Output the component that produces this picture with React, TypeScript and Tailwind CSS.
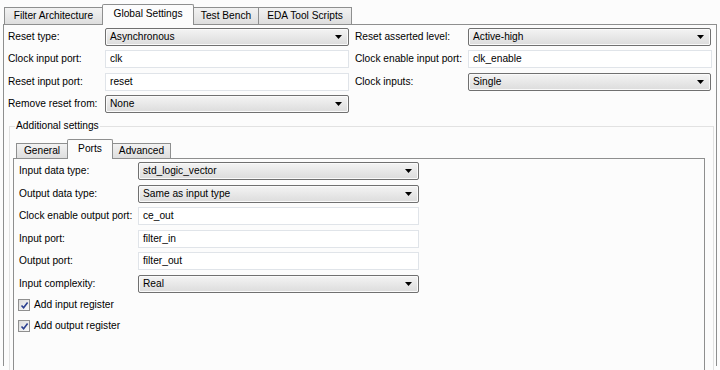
import React from "react";

const F = "font-['Liberation_Sans',Arial,sans-serif] text-[10.2px] text-black";

function Arrow() {
  return (
    <svg width="7" height="4" viewBox="0 0 7 4" className="shrink-0">
      <polygon points="0,0 7,0 3.5,4" fill="#000" />
    </svg>
  );
}

function Select({ value, w }: { value: string; w: string }) {
  return (
    <div
      className={`${w} h-[18px] flex items-center justify-between pl-[4px] pr-[6px] border border-[#707070] rounded-[2px] bg-linear-to-b from-[#f4f4f4] to-[#dcdcdc] shadow-[inset_0_0_0_1px_#fafafa]`}
    >
      <span className="leading-none">{value}</span>
      <Arrow />
    </div>
  );
}

function Input({ value, w }: { value: string; w: string }) {
  return (
    <div className={`${w} h-[18px] flex items-center pl-[4px] border border-[#e0e4e9] bg-white`}>
      <span className="leading-none">{value}</span>
    </div>
  );
}

function Tab({ label, active, w }: { label: string; active?: boolean; w: string }) {
  if (active) {
    return (
      <div
        className={`${w} h-[21px] -mb-px z-10 flex justify-center pt-[4px] border border-b-0 border-[#8e8f8f] bg-[#fcfcfc] rounded-t-[2px]`}
      >
        <span className="leading-none">{label}</span>
      </div>
    );
  }
  return (
    <div
      className={`${w} h-[17px] flex items-center justify-center border border-b-0 border-[#8e8f8f] bg-linear-to-b from-[#f2f2f2] to-[#dedede] -ml-px first:ml-0`}
    >
      <span className="leading-none">{label}</span>
    </div>
  );
}

function Check({ label }: { label: string }) {
  return (
    <div className="h-[16px] flex items-center">
      <div className="w-[12px] h-[12px] ml-[-1px] border border-[#8f8f8f] bg-linear-to-br from-[#dcdcdc] to-[#fafafa] flex items-center justify-center">
        <svg width="9" height="9" viewBox="0 0 9 9">
          <path d="M1.5 4.5 L3.6 6.8 L7.6 1.6" stroke="#2a3f8f" strokeWidth="1.6" fill="none" />
        </svg>
      </div>
      <span className="ml-[4px] leading-none">{label}</span>
    </div>
  );
}

export default function App() {
  return (
    <div className={`${F} w-[720px] h-[370px] bg-[#fcfcfc] overflow-hidden pt-[4px] pl-[3px]`}>
      {/* top tabs */}
      <div className="flex items-end h-[20px] pl-[1px]">
        <Tab label="Filter Architecture" w="w-[99px]" />
        <Tab label="Global Settings" active w="w-[92px] -ml-px" />
        <Tab label="Test Bench" w="w-[66px]" />
        <Tab label="EDA Tool Scripts" w="w-[94px]" />
      </div>
      <div className="w-[714px] h-[342px] border border-b-0 border-[#8e8f8f] pl-[4px] pt-[3px] flex flex-col">
        <div className="flex items-center h-[18px]">
          <span className="w-[97px]">Reset type:</span>
          <Select value="Asynchronous" w="w-[244px]" />
          <span className="w-[113px] ml-[6px]">Reset asserted level:</span>
          <Select value="Active-high" w="w-[243px]" />
        </div>
        <div className="flex items-center h-[18px] mt-[4px]">
          <span className="w-[97px]">Clock input port:</span>
          <Input value="clk" w="w-[244px]" />
          <span className="w-[113px] ml-[6px]">Clock enable input port:</span>
          <Input value="clk_enable" w="w-[244px]" />
        </div>
        <div className="flex items-center h-[18px] mt-[5px]">
          <span className="w-[97px]">Reset input port:</span>
          <Input value="reset" w="w-[244px]" />
          <span className="w-[113px] ml-[6px]">Clock inputs:</span>
          <Select value="Single" w="w-[243px]" />
        </div>
        <div className="flex items-center h-[18px] mt-[4px]">
          <span className="w-[97px]">Remove reset from:</span>
          <Select value="None" w="w-[244px]" />
        </div>

        {/* Additional settings group */}
        <div className="relative mt-[13px] ml-[1px] w-[705px] flex-1 border border-b-0 border-[#e2e2e2] pl-[3px] pr-[8px]">
          <span className="absolute -top-[6px] left-[5px] bg-[#fcfcfc] px-[1px] leading-none">
            Additional settings
          </span>
          <div className="flex items-end h-[19px] mt-[12px] pl-[3px]">
            <div className="w-[52px] h-[15px] flex items-center justify-center border border-b-0 border-[#8e8f8f] bg-linear-to-b from-[#f2f2f2] to-[#dedede]">
              <span className="leading-none">General</span>
            </div>
            <div className="w-[46px] h-[20px] -mb-px -ml-px z-10 flex justify-center pt-[4px] border border-b-0 border-[#8e8f8f] bg-[#fcfcfc] rounded-t-[2px]">
              <span className="leading-none">Ports</span>
            </div>
            <div className="w-[59px] h-[15px] -ml-px flex items-center justify-center border border-b-0 border-[#8e8f8f] bg-linear-to-b from-[#f2f2f2] to-[#dedede]">
              <span className="leading-none">Advanced</span>
            </div>
          </div>
          <div className="w-[692px] h-[220px] border border-b-0 border-[#8e8f8f] pl-[5px] pt-[3px] flex flex-col">
            <div className="flex items-center h-[18px]">
              <span className="w-[119px]">Input data type:</span>
              <Select value="std_logic_vector" w="w-[281px]" />
            </div>
            <div className="flex items-center h-[18px] mt-[5px]">
              <span className="w-[119px]">Output data type:</span>
              <Select value="Same as input type" w="w-[281px]" />
            </div>
            <div className="flex items-center h-[18px] mt-[4px]">
              <span className="w-[119px]">Clock enable output port:</span>
              <Input value="ce_out" w="w-[281px]" />
            </div>
            <div className="flex items-center h-[18px] mt-[5px]">
              <span className="w-[119px]">Input port:</span>
              <Input value="filter_in" w="w-[281px]" />
            </div>
            <div className="flex items-center h-[18px] mt-[4px]">
              <span className="w-[119px]">Output port:</span>
              <Input value="filter_out" w="w-[281px]" />
            </div>
            <div className="flex items-center h-[18px] mt-[5px]">
              <span className="w-[119px]">Input complexity:</span>
              <Select value="Real" w="w-[281px]" />
            </div>
            <div className="mt-[4px]">
              <Check label="Add input register" />
            </div>
            <div className="mt-[5px]">
              <Check label="Add output register" />
            </div>
          </div>
        </div>
      </div>
    </div>
  );
}
